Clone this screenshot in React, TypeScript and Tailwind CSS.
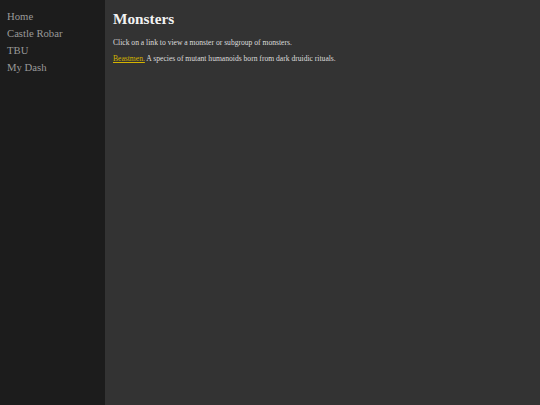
import React from 'react';

const NAV = ['Home', 'Castle Robar', 'TBU', 'My Dash'];

export default function App() {
  return (
    <div
      className="flex h-[405px] w-[540px] overflow-hidden"
      style={{ fontFamily: '"Liberation Serif", serif' }}
    >
      <nav className="w-[105px] shrink-0 bg-[#1c1c1c] pt-[8px] pl-[7px]">
        <ul className="flex flex-col">
          {NAV.map((n) => (
            <li key={n} className="text-[10.7px] leading-[17px] text-[#999999]">
              <a href="#">{n}</a>
            </li>
          ))}
        </ul>
      </nav>
      <main className="flex-1 bg-[#333333] pl-[8px] pt-[9px] text-[#dddddd]">
        <h1 className="text-[15.3px] font-bold leading-[20px] text-[#f2f2f2]">Monsters</h1>
        <p className="mt-[9px] text-[7.6px] leading-[10px]">
          Click on a link to view a monster or subgroup of monsters.
        </p>
        <p className="mt-[6px] text-[7.6px] leading-[10px]">
          <a href="#" className="text-[#d4b300] underline">
            Beastmen.
          </a>{' '}
          A species of mutant humanoids born from dark druidic rituals.
        </p>
      </main>
    </div>
  );
}
